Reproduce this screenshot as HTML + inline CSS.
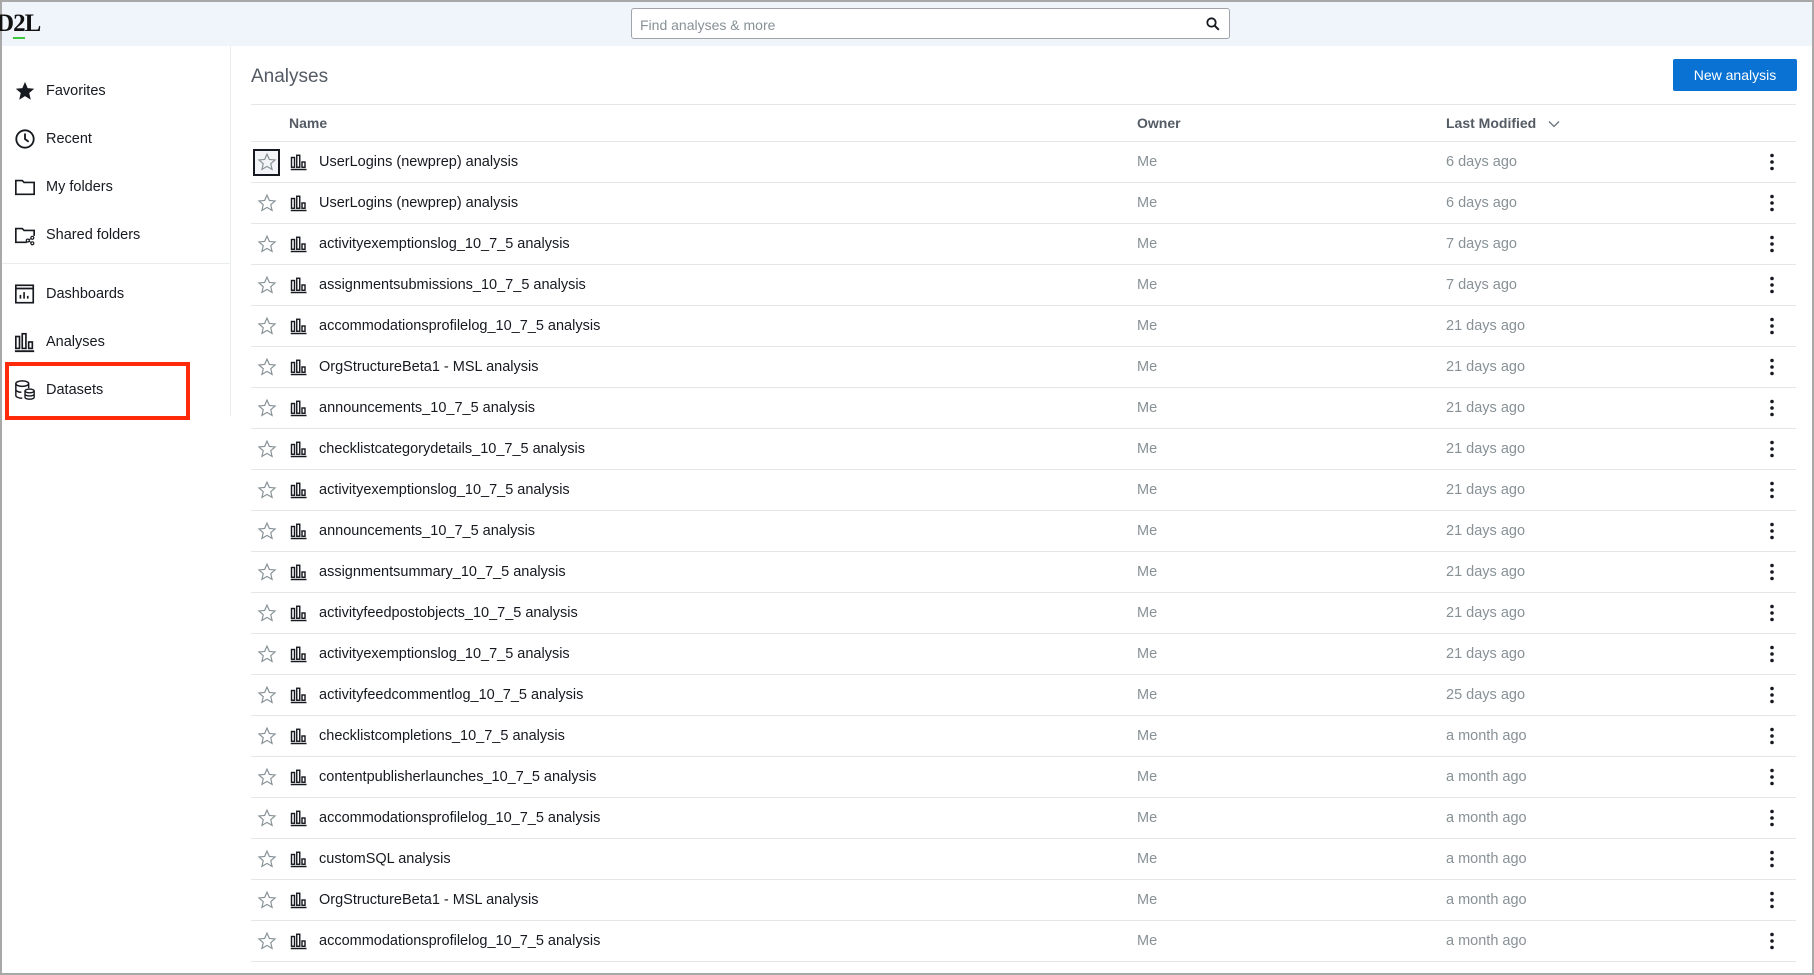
<!DOCTYPE html>
<html><head><meta charset="utf-8"><style>
*{box-sizing:border-box;margin:0;padding:0}
body{width:1814px;height:975px;overflow:hidden;background:#fff;font-family:"Liberation Sans",sans-serif;border:2px solid #a8a8a8;position:relative}
.top{position:absolute;left:0;top:0;width:1810px;height:44px;background:#f0f4fb}
.logo{position:absolute;left:-6px;top:8px;font-family:"Liberation Serif",serif;font-weight:bold;font-size:25px;color:#111;letter-spacing:-1px}
.logo u{text-decoration:none;border-bottom:2px solid #3ec63e}
.search{position:absolute;left:629px;top:6px;width:599px;height:31px;border:1px solid #a0a4aa;border-radius:3px;background:#fff;font-size:14px;color:#879196;padding:8px 8px}
.search svg{position:absolute;right:9px;top:8px}
.side{position:absolute;left:0;top:44px;width:229px;height:370px;border-right:1px solid #eaeded}
.item{position:absolute;left:12px;font-size:14.5px;color:#16191f;display:flex;align-items:center}
.item svg{margin-right:10px}
.div{position:absolute;left:0;top:217px;width:229px;height:1px;background:#eaeded}
.red{position:absolute;left:3px;top:360px;width:185px;height:58px;border:4px solid #ff2a0a}
h1{position:absolute;left:249px;top:64px;font-size:19px;font-weight:normal;color:#545b64}
.btn{position:absolute;left:1671px;top:57px;width:124px;height:32px;background:#0972d3;color:#fff;border-radius:2px;font-size:14px;text-align:center;line-height:32px}
.tbl{position:absolute;left:249px;top:102px;width:1545px}
.hd{height:38px;border-top:1px solid #e4e6e8;border-bottom:1px solid #e4e6e8;position:relative;font-size:14px;font-weight:bold;color:#545b64}
.hd span{position:absolute;top:10px}
.row{height:41px;border-bottom:1px solid #e4e6e8;position:relative;font-size:14.5px}
.row span{position:absolute;top:12px}
.n{left:68px;color:#16191f}.o{left:886px;color:#879196}.d{left:1195px;color:#879196}
.st{position:absolute;left:6px;top:10px}
.ic{position:absolute;left:39px;top:11px}
.dots{position:absolute;left:1518px;top:11px}
.sel{position:absolute;left:2px;top:7px;width:27px;height:27px;border:2px solid #16191f;background:#f2f4f8}
</style></head><body>
<div class="top"><div class="logo">D<u>2</u>L</div>
<div class="search">Find analyses &amp; more<svg width="14" height="14" viewBox="0 0 14 14"><circle cx="5.5" cy="5.5" r="4.2" fill="none" stroke="#16191f" stroke-width="1.8"/><path d="M8.6 8.6L12.8 12.8" stroke="#16191f" stroke-width="2"/></svg></div></div>
<div class="side">
<div class="item" style="top:34px"><svg width="22" height="22" viewBox="0 0 24 24"><path d="M12 2l2.9 6.9 7.1.6-5.4 4.7 1.7 7.3L12 17.6 5.7 21.5l1.7-7.3L2 9.5l7.1-.6z" fill="#16191f"/></svg>Favorites</div>
<div class="item" style="top:82px"><svg width="22" height="22" viewBox="0 0 24 24"><circle cx="12" cy="12" r="9.5" fill="none" stroke="#16191f" stroke-width="2"/><path d="M12 6v6l4 3" fill="none" stroke="#16191f" stroke-width="2"/></svg>Recent</div>
<div class="item" style="top:130px"><svg width="22" height="22" viewBox="0 0 24 24"><path d="M2 5h7l2 2h11v13H2z" fill="none" stroke="#16191f" stroke-width="1.8"/></svg>My folders</div>
<div class="item" style="top:178px"><svg width="22" height="22" viewBox="0 0 24 24"><path d="M14 20H2V5h7l2 2h11v6" fill="none" stroke="#16191f" stroke-width="1.8"/><circle cx="20" cy="15" r="1.6" fill="none" stroke="#16191f" stroke-width="1.3"/><circle cx="15" cy="18" r="1.6" fill="none" stroke="#16191f" stroke-width="1.3"/><circle cx="20" cy="21" r="1.6" fill="none" stroke="#16191f" stroke-width="1.3"/><path d="M16.5 17.2l2-1.3M16.5 18.8l2 1.3" stroke="#16191f" stroke-width="1.2"/></svg>Shared folders</div>
<div class="div"></div>
<div class="item" style="top:237px"><svg width="22" height="22" viewBox="0 0 24 24"><rect x="2" y="2.5" width="19" height="19" fill="none" stroke="#16191f" stroke-width="1.8"/><path d="M2 6h19" stroke="#16191f" stroke-width="1.8"/><path d="M7 17v-4M11 17v-7M15 17v-3" stroke="#16191f" stroke-width="1.8"/></svg>Dashboards</div>
<div class="item" style="top:285px"><svg width="22" height="22" viewBox="0 0 24 24"><path d="M1 22h21" stroke="#16191f" stroke-width="2"/><rect x="2" y="6" width="4" height="13" fill="none" stroke="#16191f" stroke-width="1.8"/><rect x="9" y="3" width="4" height="16" fill="none" stroke="#16191f" stroke-width="1.8"/><rect x="16" y="12" width="4" height="7" fill="none" stroke="#16191f" stroke-width="1.8"/></svg>Analyses</div>
<div class="item" style="top:333px"><svg width="22" height="22" viewBox="0 0 24 24"><ellipse cx="9" cy="5" rx="7" ry="3" fill="none" stroke="#16191f" stroke-width="1.6"/><path d="M2 5v13c0 1.5 3 3 7 3M2 11.5c0 1.5 3 3 6 3" fill="none" stroke="#16191f" stroke-width="1.6"/><path d="M16 5v5" stroke="#16191f" stroke-width="1.6"/><ellipse cx="17" cy="13" rx="5" ry="2" fill="none" stroke="#16191f" stroke-width="1.5"/><path d="M12 13v7c0 1 2 2 5 2s5-1 5-2v-7M12 16.5c0 1 2 2 5 2s5-1 5-2" fill="none" stroke="#16191f" stroke-width="1.5"/></svg>Datasets</div>
</div>
<div class="red"></div>
<h1>Analyses</h1>
<div class="btn">New analysis</div>
<div class="tbl">
<div class="hd"><span style="left:38px">Name</span><span style="left:886px">Owner</span><span style="left:1195px">Last Modified <svg width="12" height="8" viewBox="0 0 12 8" style="margin-left:8px"><path d="M1 1.5l5 5 5-5" fill="none" stroke="#687078" stroke-width="1.3"/></svg></span></div>
<div id="rows"></div>
</div>
<script>
var d=[["UserLogins (newprep) analysis","6 days ago"],["UserLogins (newprep) analysis","6 days ago"],["activityexemptionslog_10_7_5 analysis","7 days ago"],["assignmentsubmissions_10_7_5 analysis","7 days ago"],["accommodationsprofilelog_10_7_5 analysis","21 days ago"],["OrgStructureBeta1 - MSL analysis","21 days ago"],["announcements_10_7_5 analysis","21 days ago"],["checklistcategorydetails_10_7_5 analysis","21 days ago"],["activityexemptionslog_10_7_5 analysis","21 days ago"],["announcements_10_7_5 analysis","21 days ago"],["assignmentsummary_10_7_5 analysis","21 days ago"],["activityfeedpostobjects_10_7_5 analysis","21 days ago"],["activityexemptionslog_10_7_5 analysis","21 days ago"],["activityfeedcommentlog_10_7_5 analysis","25 days ago"],["checklistcompletions_10_7_5 analysis","a month ago"],["contentpublisherlaunches_10_7_5 analysis","a month ago"],["accommodationsprofilelog_10_7_5 analysis","a month ago"],["customSQL analysis","a month ago"],["OrgStructureBeta1 - MSL analysis","a month ago"],["accommodationsprofilelog_10_7_5 analysis","a month ago"]];
var star='<svg class="st" width="20" height="20" viewBox="0 0 24 24"><path d="M12 2.5l2.8 6.4 6.9.6-5.2 4.6 1.6 6.8L12 17.3 5.9 20.9l1.6-6.8-5.2-4.6 6.9-.6z" fill="none" stroke="#879196" stroke-width="1.4"/></svg>';
var ic='<svg class="ic" width="18" height="18" viewBox="0 0 24 24"><path d="M1 22h21" stroke="#16191f" stroke-width="2"/><rect x="2" y="6" width="4" height="13" fill="none" stroke="#16191f" stroke-width="1.9"/><rect x="9" y="3" width="4" height="16" fill="none" stroke="#16191f" stroke-width="1.9"/><rect x="16" y="12" width="4" height="7" fill="none" stroke="#16191f" stroke-width="1.9"/></svg>';
var dots='<svg class="dots" width="6" height="18" viewBox="0 0 6 18"><circle cx="3" cy="2.5" r="1.8" fill="#16191f"/><circle cx="3" cy="9" r="1.8" fill="#16191f"/><circle cx="3" cy="15.5" r="1.8" fill="#16191f"/></svg>';
var h='';d.forEach(function(r,i){h+='<div class="row">'+(i==0?'<div class="sel"></div>':'')+star+ic+'<span class="n">'+r[0]+'</span><span class="o">Me</span><span class="d">'+r[1]+'</span>'+dots+'</div>';});
document.getElementById('rows').innerHTML=h;
</script>
</body></html>
